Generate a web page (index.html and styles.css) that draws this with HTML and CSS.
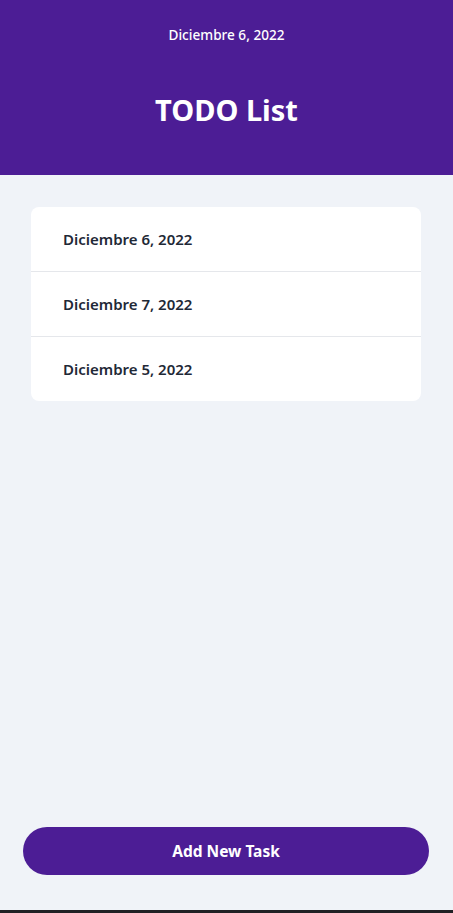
FILE: index.html
```html
<!DOCTYPE html>
<html lang="es">
<head>
<meta charset="utf-8">
<title>TODO List</title>
<link rel="stylesheet" href="styles.css">
</head>
<body>
<div class="app">
  <header class="header">
    <p class="header-date">Diciembre 6, 2022</p>
    <h1 class="header-title">TODO List</h1>
  </header>
  <main class="content">
    <ul class="day-list">
      <li class="day-item">Diciembre 6, 2022</li>
      <li class="day-item">Diciembre 7, 2022</li>
      <li class="day-item">Diciembre 5, 2022</li>
    </ul>
  </main>
  <div class="actions">
    <button class="add-btn" type="button">Add New Task</button>
  </div>
  <div class="bottom-bar"></div>
</div>
</body>
</html>
```

FILE: styles.css
```css
* { box-sizing: border-box; }
html, body { margin: 0; padding: 0; }
body {
  font-family: "Noto Sans", "Open Sans", sans-serif;
  background: #f0f3f8;
}
.app {
  height: 913px;
  display: flex;
  flex-direction: column;
}
.header {
  height: 175px;
  background: #4c1d95;
  color: #ffffff;
  display: flex;
  flex-direction: column;
  align-items: center;
}
.header-date {
  margin: 25px 0 0;
  font-size: 13.6px;
  font-weight: 500;
  line-height: 20px;
}
.header-title {
  margin: 45px 0 0;
  font-size: 29px;
  font-weight: 700;
  line-height: 40px;
}
.content {
  flex: 1;
  padding: 32px 32px 0 31px;
}
.day-list {
  list-style: none;
  margin: 0;
  padding: 0;
  background: #ffffff;
  border-radius: 8px;
  overflow: hidden;
}
.day-item {
  height: 65px;
  display: flex;
  align-items: center;
  padding-left: 32px;
  font-size: 15px;
  font-weight: 600;
  color: #1f2937;
  border-bottom: 1px solid #e5e7eb;
}
.day-item:last-child { border-bottom: none; height: 64px; }
.actions {
  padding: 0 24px 35px 23px;
}
.add-btn {
  width: 100%;
  height: 48px;
  border: none;
  border-radius: 24px;
  background: #4c1d95;
  color: #ffffff;
  font-family: inherit;
  font-size: 15.5px;
  font-weight: 700;
}
.bottom-bar {
  height: 3px;
  background: #202124;
}
```
